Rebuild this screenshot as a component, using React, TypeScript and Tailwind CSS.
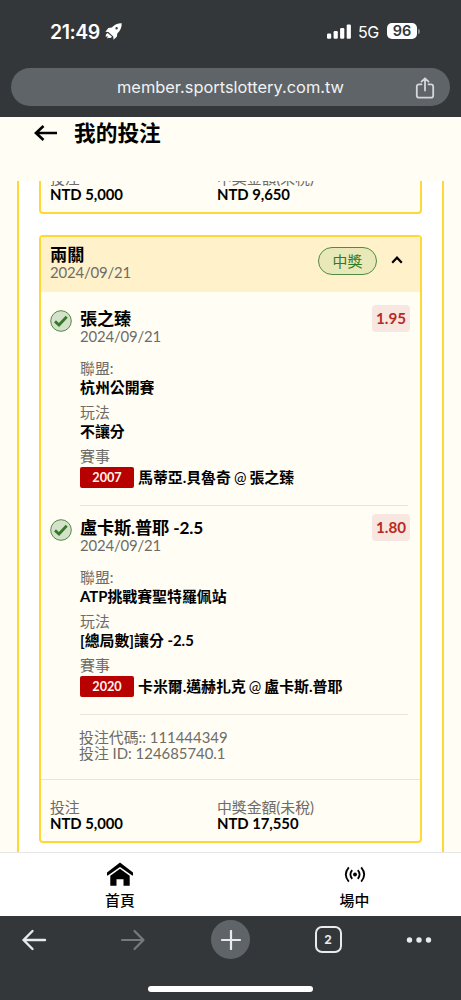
import type { ReactNode } from "react";

type Leg = {
  pick: string;
  date: string;
  odds: string;
  league: string;
  market: string;
  code: string;
  away: string;
  home: string;
};

const legs: Leg[] = [
  {
    pick: "張之臻",
    date: "2024/09/21",
    odds: "1.95",
    league: "杭州公開賽",
    market: "不讓分",
    code: "2007",
    away: "馬蒂亞.貝魯奇",
    home: "張之臻",
  },
  {
    pick: "盧卡斯.普耶 -2.5",
    date: "2024/09/21",
    odds: "1.80",
    league: "ATP挑戰賽聖特羅佩站",
    market: "[總局數]讓分 -2.5",
    code: "2020",
    away: "卡米爾.邁赫扎克",
    home: "盧卡斯.普耶",
  },
];

function StatusBar() {
  return (
    <div className="flex h-[68px] items-center justify-between pr-[41px] pb-[6px] pl-[50px] text-white">
      <div className="flex h-6 items-center gap-[5px] pt-px">
        <span className="text-[19.5px] leading-6 font-semibold tracking-[-0.45px]">21:49</span>
        <svg width="17" height="17" viewBox="0 0 17 17" fill="currentColor" className="-mt-px">
          <path
            fillRule="evenodd"
            d="M16.7.3C12.9.2 9.4 1.6 6.8 4.6L3.4 5.1.4 8.8l3 .2 4.9 4.4.2 3.3 3.3-3 .5-3.3c3.2-2.7 4.5-6.1 4.4-10.1ZM11.6 4a1.2 1.2 0 1 1 0 2.4 1.2 1.2 0 0 1 0-2.4Z"
          />
          <path d="M2.6 9.9C1 10.8.4 12.5.9 14l1.8-1.2-.6 2.6 1.5-.6c1.2.8 2.6 0 3.3-1.4Z" />
        </svg>
      </div>
      <div className="flex h-6 items-center">
        <svg width="24" height="15" viewBox="0 0 24 15" fill="currentColor">
          <rect x="0" y="9.6" width="4.2" height="5.2" rx="1.2" />
          <rect x="6.6" y="7" width="4.2" height="7.8" rx="1.2" />
          <rect x="13.1" y="4" width="4.2" height="10.8" rx="1.2" />
          <rect x="19.7" y="0.4" width="4.2" height="14.4" rx="1.2" />
        </svg>
        <span className="ml-[7px] w-[29px] pt-px text-[16px] leading-6 tracking-[-0.5px]">5G</span>
        <span className="flex h-4 w-[30px] items-center justify-center rounded-[5px] bg-white text-[14.5px] leading-none font-semibold text-[#333739]">
          96
        </span>
        <span className="ml-px h-[5px] w-[2px] rounded-r-full bg-[#85888a]" />
      </div>
    </div>
  );
}

function BrowserTop() {
  return (
    <header className="h-[117px] shrink-0 bg-[#333739] font-['Inter',sans-serif]">
      <StatusBar />
      <div className="mx-[11px] flex h-[38px] items-center justify-center rounded-full bg-[#5f6468] pr-[15px] pl-[15px]">
        <span className="w-5" />
        <span className="flex-1 text-center text-[16.4px] leading-5 text-[#f1f2f3]">
          member.sportslottery.com.tw
        </span>
        <svg width="20" height="22" viewBox="0 0 20 22" fill="none" stroke="#d5d7d9" strokeWidth="1.8" strokeLinecap="round" strokeLinejoin="round" className="mt-px">
          <path d="M6.5 7.3H4A2.2 2.2 0 0 0 1.8 9.5v9A2.2 2.2 0 0 0 4 20.7h12a2.2 2.2 0 0 0 2.2-2.2v-9A2.2 2.2 0 0 0 16 7.3h-2.5M10 13.5V1.4M6.5 4.6 10 1.3l3.5 3.3" />
        </svg>
      </div>
    </header>
  );
}

function CheckIcon() {
  return (
    <svg width="22" height="22" viewBox="0 0 22 22" fill="none">
      <circle cx="11" cy="11" r="10.3" fill="#d5e2cb" stroke="#4f8c43" strokeWidth="1" />
      <path d="m5 11.4 4 3.6 7.7-8.2" stroke="#347a26" strokeWidth="2.8" />
    </svg>
  );
}

function Field({ label, children }: { label: string; children: ReactNode }) {
  return (
    <div>
      <div className="h-[18px] leading-[17px] text-[#6d6c68]">{label}</div>
      <div className="min-h-[18px] leading-[18px] font-bold text-black">{children}</div>
    </div>
  );
}

function LegRow({ leg }: { leg: Leg }) {
  return (
    <div className="flex h-[209px] pt-[13px] pl-[9px]">
      <div className="w-[30px] shrink-0">
        <CheckIcon />
      </div>
      <div className="mr-[12px] flex flex-1 flex-col border-b border-[#e9e4dc]">
        <div className="-mr-[2px] flex items-start justify-between">
          <div>
            <div className="text-[17.2px] leading-[18px] font-bold tracking-[-0.15px] text-black">{leg.pick}</div>
            <div className="h-[18px] leading-[16px] tracking-[-0.15px] text-[#6d6c68]">{leg.date}</div>
          </div>
          <span className="-mt-[5px] flex h-[27px] w-[38px] items-center justify-center rounded-[4px] bg-[#f8e7e0] text-[15.2px] font-bold text-[#b92a22]">
            {leg.odds}
          </span>
        </div>
        <div className="mt-[14px] flex flex-col gap-2">
          <Field label="聯盟:">{leg.league}</Field>
          <Field label="玩法">{leg.market}</Field>
          <Field label="賽事">
            <div className="flex h-[22px] items-center gap-[4px]">
              <span className="flex h-[21px] w-[54px] items-center justify-center rounded-[2px] bg-[#b80000] text-[12.7px] text-[#fff3ef]">
                {leg.code}
              </span>
              <span className="whitespace-nowrap [word-spacing:-0.6px]">
                {leg.away} <span className="font-normal">@</span> {leg.home}
              </span>
            </div>
          </Field>
        </div>
      </div>
    </div>
  );
}

function Totals({ stake, payout }: { stake: string; payout: string }) {
  return (
    <div className="flex h-[61px] px-[9px] pt-[19px] tracking-[-0.05px]">
      <div className="w-[167px]">
        <div className="h-4 leading-4 text-[#6d6c68]">投注</div>
        <div className="h-4 leading-4 font-bold text-black">{stake}</div>
      </div>
      <div>
        <div className="h-4 leading-4 text-[#6d6c68]">中獎金額(未稅)</div>
        <div className="h-4 leading-4 font-bold text-black">{payout}</div>
      </div>
    </div>
  );
}

function BetCard() {
  return (
    <section className="mt-[21px] rounded-[4px] border-2 border-[#ffd836] bg-[#fffdf4]">
      <div className="flex h-[55px] items-start justify-between bg-[#fff1ca] pt-[9px] pl-[9px]">
        <div>
          <div className="text-[17.2px] leading-[18px] font-bold text-black">兩關</div>
          <div className="leading-[16px] tracking-[-0.15px] text-[#6d6c68]">2024/09/21</div>
        </div>
        <div className="mt-px flex items-center">
          <span className="flex h-[28px] w-[59px] items-center justify-center rounded-full border border-[#4f8c43] bg-[#e9e8b9] text-[#347a26]">
            中獎
          </span>
          <svg width="12" height="8" viewBox="0 0 12 8" fill="none" stroke="#000" strokeWidth="2.2" className="mr-[17px] ml-[14px] -mt-[2px]">
            <path d="M1.2 6.7 6 1.7l4.8 5" />
          </svg>
        </div>
      </div>
      <div className="pt-[5px]">
        {legs.map((leg) => (
          <LegRow key={leg.code} leg={leg} />
        ))}
      </div>
      <div className="h-[65px] border-b border-[#e9e4dc] pt-[14px] pl-[38px] leading-4 text-[#6d6c68]">
        <div className="h-4">投注代碼:: 111444349</div>
        <div className="h-4">投注 ID: 124685740.1</div>
      </div>
      <Totals stake="NTD 5,000" payout="NTD 17,550" />
    </section>
  );
}

function TabBar() {
  return (
    <nav className="flex h-[64px] shrink-0 border-t border-[#e6e6e6] bg-white font-medium text-black">
      <div className="flex w-[240px] flex-col items-center pt-[9px]">
        <svg width="26" height="25" viewBox="0 0 26 25" fill="#000">
          <path d="M13 0.6 0 10.4v3.2h.8L13 4.9l12.2 8.7h.8v-3.2Z" />
          <path d="M13 6.7 3.3 13.7v10.1h6.2v-6.6h7v6.6h6.2V13.7Z" />
        </svg>
        <span className="mt-[5px] leading-4">首頁</span>
      </div>
      <div className="flex flex-1 flex-col items-center pt-[9px] pl-[8px]">
        <svg width="22" height="25" viewBox="0 0 22 25" fill="none" stroke="#000" strokeWidth="1.8">
          <circle cx="11" cy="12.5" r="1.9" fill="#000" stroke="none" />
          <path d="M8.2 8.2Q4.6 12.5 8.2 16.8M13.8 8.2q3.6 4.3 0 8.6M4.8 5.3q-6 7.2 0 14.4M17.2 5.3q6 7.2 0 14.4" />
        </svg>
        <span className="mt-[5px] leading-4">場中</span>
      </div>
    </nav>
  );
}

function BrowserBottom() {
  return (
    <footer className="h-[84px] shrink-0 bg-[#333739] pt-[3px]">
      <div className="flex h-[41px] items-center justify-between pr-[29px] pl-[21px]">
        <svg width="26" height="22" viewBox="0 0 26 22" fill="none" stroke="#e8eaed" strokeWidth="2.4" strokeLinecap="round" strokeLinejoin="round">
          <path d="M24 11H2.5M11.5 2 2.5 11l9 9" />
        </svg>
        <svg width="26" height="22" viewBox="0 0 26 22" fill="none" stroke="#77797b" strokeWidth="2.2" strokeLinecap="round" strokeLinejoin="round" className="ml-[9px]">
          <path d="M2 11h21.5M14.5 2l9 9-9 9" />
        </svg>
        <span className="ml-[2px] flex size-[39px] items-center justify-center rounded-full bg-[#5f6468]">
          <svg width="20" height="20" viewBox="0 0 20 20" fill="none" stroke="#e8eaed" strokeWidth="2.2" strokeLinecap="round">
            <path d="M10 1v18M1 10h18" />
          </svg>
        </span>
        <span className="mr-px ml-px flex size-[27px] items-center justify-center rounded-[7px] border-2 border-[#e8eaed] font-['Inter',sans-serif] text-[12px] leading-none font-bold text-[#e8eaed]">
          2
        </span>
        <svg width="26" height="6" viewBox="0 0 26 6" fill="#e8eaed">
          <circle cx="3.5" cy="3" r="2.7" />
          <circle cx="13" cy="3" r="2.7" />
          <circle cx="22.5" cy="3" r="2.7" />
        </svg>
      </div>
      <div className="mx-auto mt-[26px] h-[6px] w-[165px] rounded-full bg-white" />
    </footer>
  );
}

export default function App() {
  return (
    <div className="flex h-[1000px] w-[461px] flex-col overflow-hidden bg-[#fffdf4] font-['Lato','Noto_Sans_CJK_TC',sans-serif] text-[14.9px]">
      <BrowserTop />
      <div className="flex h-[64px] shrink-0 items-start gap-[16px] pt-[4px] pl-[34px]">
        <svg width="24" height="24" viewBox="0 0 24 24" fill="none" stroke="#000" strokeWidth="2.7">
          <path d="M23 12H2.5M9.5 5 2 12l7.5 7" />
        </svg>
        <h1 className="text-[21.7px] leading-6 font-bold text-black">我的投注</h1>
      </div>
      <main className="mx-[17px] h-[671px] shrink-0 overflow-hidden border-x-2 border-[#ffd836] bg-white px-5">
        <section className="-mt-[30px] rounded-b-[4px] border-2 border-t-0 border-[#ffd836] bg-[#fffdf4]">
          <Totals stake="NTD 5,000" payout="NTD 9,650" />
        </section>
        <BetCard />
      </main>
      <TabBar />
      <BrowserBottom />
    </div>
  );
}
